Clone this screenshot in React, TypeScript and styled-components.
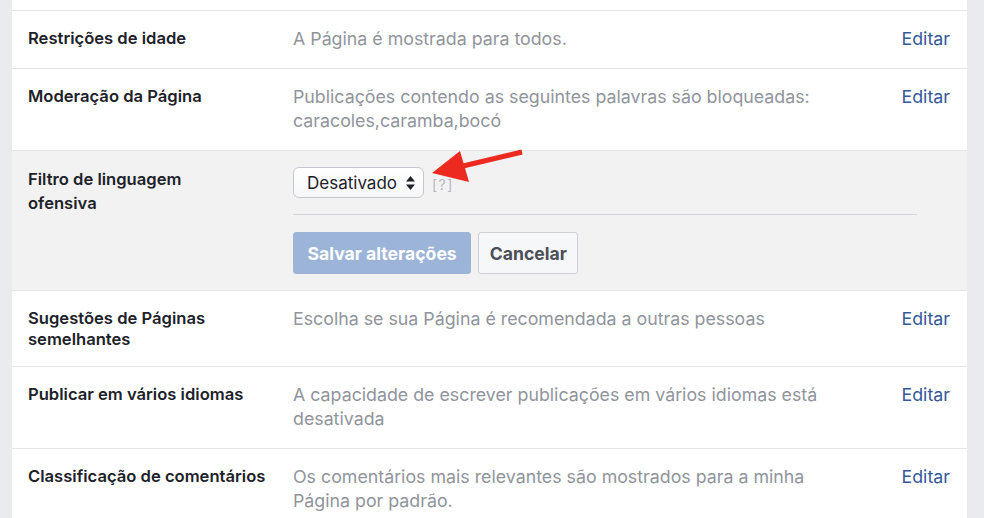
import React from "react";
import styled, { createGlobalStyle } from "styled-components";

const Global = createGlobalStyle`
  html, body { margin: 0; padding: 0; background: #e9ebee; }
  body { font-family: Inter, "Liberation Sans", Arial, sans-serif; -webkit-font-smoothing: antialiased; }
`;

const Page = styled.div`
  position: relative;
  display: flex;
  padding: 0 17px 0 12px;
  height: 518px;
  overflow: hidden;
`;

const Panel = styled.div`
  flex: 1;
  background: #fff;
  display: flex;
  flex-direction: column;
`;

const PrevRowEnd = styled.div`
  flex-shrink: 0;
  height: 10px;
  border-bottom: 1px solid #e5e6e9;
`;

const Row = styled.div<{ $editing?: boolean }>`
  flex-shrink: 0;
  display: grid;
  grid-template-columns: 265px 540px 1fr;
  padding: ${(p) => (p.$editing ? "16px 17px 16px 16px" : "16px 17px 17px 16px")};
  background: ${(p) => (p.$editing ? "#f2f2f2" : "#fff")};
  border-bottom: 1px solid #e5e6e9;
`;

const Label = styled.div<{ $narrow?: boolean }>`
  font-weight: 600;
  font-size: 16.6px;
  line-height: ${(p) => (p.$narrow ? "24px" : "20.5px")};
  color: #1d2129;
  padding-top: ${(p) => (p.$narrow ? "0" : "1px")};
  max-width: ${(p) => (p.$narrow ? "200px" : "245px")};
`;

const Value = styled.div`
  font-size: 17.8px;
  line-height: 24px;
  color: #90949c;
`;

const EditLink = styled.a`
  justify-self: end;
  font-size: 17.8px;
  line-height: 24px;
  color: #365899;
  text-decoration: none;
  cursor: pointer;
`;

const EditArea = styled.div`
  grid-column: 2 / 4;
  width: 624px;
  display: flex;
  flex-direction: column;
`;

const SelectLine = styled.div`
  display: flex;
  align-items: center;
  gap: 8px;
  padding-bottom: 16px;
  border-bottom: 1px solid #d3d6db;
`;

const SelectBox = styled.div`
  box-sizing: border-box;
  height: 31px;
  width: 131px;
  display: flex;
  align-items: center;
  justify-content: space-between;
  padding: 0 8px 0 13px;
  background: linear-gradient(#ffffff, #f6f7f9);
  border: 1px solid #c4c8ce;
  border-radius: 6px;
  font-size: 17px;
  color: #1d2129;
`;

const Help = styled.span`
  font-size: 14px;
  color: #b4b8be;
  letter-spacing: 1.5px;
  margin-top: 4px;
`;

const Buttons = styled.div`
  display: flex;
  gap: 7px;
  padding-top: 17px;
`;

const Button = styled.button<{ $primary?: boolean }>`
  box-sizing: border-box;
  height: 42px;
  padding: 0 ${(p) => (p.$primary ? "13.5px" : "10.5px")};
  border-radius: 3px;
  font-family: Inter, "Liberation Sans", Arial, sans-serif;
  font-weight: 700;
  font-size: 17.6px;
  border: 1px solid ${(p) => (p.$primary ? "#9cb4d8" : "#ced0d4")};
  background: ${(p) => (p.$primary ? "#9cb4d8" : "#f6f7f9")};
  color: ${(p) => (p.$primary ? "#fff" : "#4b4f56")};
`;

const Arrow = styled.svg`
  position: absolute;
  left: 425px;
  top: 140px;
  width: 105px;
  height: 50px;
  pointer-events: none;
`;

type Item = { label: string; value: string };

const before: Item[] = [
  { label: "Restrições de idade", value: "A Página é mostrada para todos." },
  {
    label: "Moderação da Página",
    value: "Publicações contendo as seguintes palavras são bloqueadas: caracoles,caramba,bocó",
  },
];

const after: Item[] = [
  { label: "Sugestões de Páginas semelhantes", value: "Escolha se sua Página é recomendada a outras pessoas" },
  {
    label: "Publicar em vários idiomas",
    value: "A capacidade de escrever publicações em vários idiomas está desativada",
  },
  {
    label: "Classificação de comentários",
    value: "Os comentários mais relevantes são mostrados para a minha Página por padrão.",
  },
];

const SettingRow = ({ item }: { item: Item }) => (
  <Row>
    <Label>{item.label}</Label>
    <Value>{item.value}</Value>
    <EditLink>Editar</EditLink>
  </Row>
);

export default function App() {
  return (
    <>
      <Global />
      <Page>
        <Panel>
          <PrevRowEnd />
          {before.map((it) => (
            <SettingRow key={it.label} item={it} />
          ))}
          <Row $editing>
            <Label $narrow>Filtro de linguagem ofensiva</Label>
            <EditArea>
              <SelectLine>
                <SelectBox>
                  <span>Desativado</span>
                  <svg width="9" height="14" viewBox="0 0 9 14">
                    <path d="M4.5 0 L9 5.5 L0 5.5 Z" fill="#1d2129" />
                    <path d="M4.5 14 L9 8.5 L0 8.5 Z" fill="#1d2129" />
                  </svg>
                </SelectBox>
                <Help>[?]</Help>
              </SelectLine>
              <Buttons>
                <Button $primary>Salvar alterações</Button>
                <Button>Cancelar</Button>
              </Buttons>
            </EditArea>
          </Row>
          {after.map((it) => (
            <SettingRow key={it.label} item={it} />
          ))}
        </Panel>
        <Arrow viewBox="0 0 105 50">
          <line x1="38" y1="26" x2="97" y2="12" stroke="#ec2a1f" strokeWidth="5" strokeLinecap="butt" />
          <polygon points="7,33 35,11 44,42" fill="#ec2a1f" />
        </Arrow>
      </Page>
    </>
  );
}
